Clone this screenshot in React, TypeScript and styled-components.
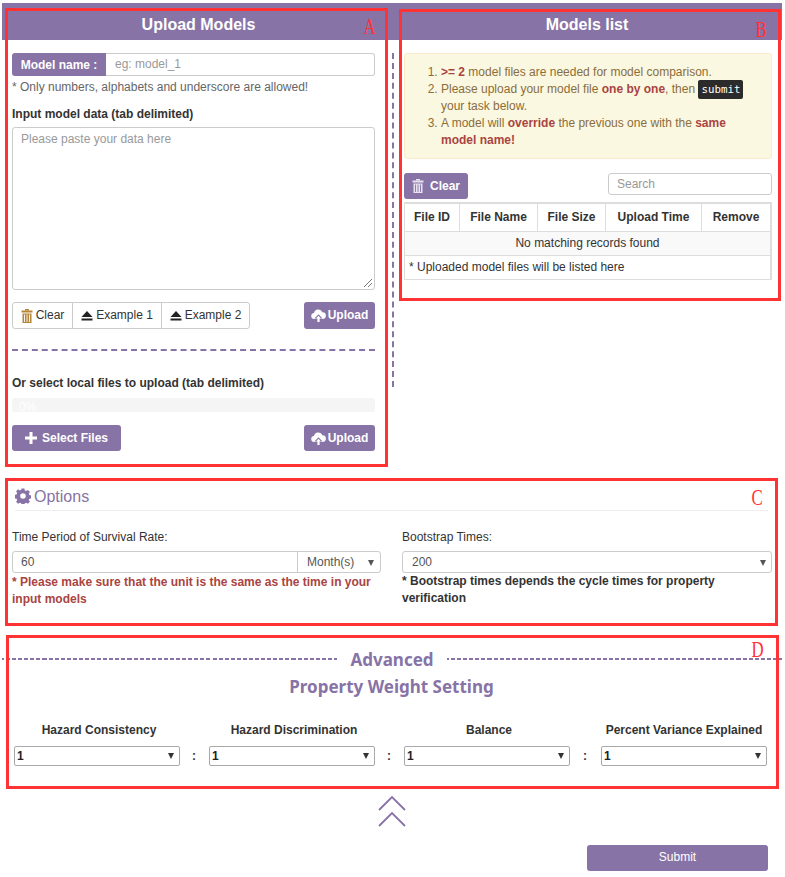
import React from "react";
import styled, { createGlobalStyle } from "styled-components";

const PURPLE = "#8773a6";

const Global = createGlobalStyle`
  html, body { margin: 0; padding: 0; background: #fff; }
  body { font-family: "Liberation Sans", Arial, sans-serif; font-size: 12px; line-height: 17px; color: #333; }
  * { box-sizing: border-box; }
`;

const Page = styled.div`
  position: relative;
  width: 785px;
  height: 877px;
  overflow: hidden;
  padding-top: 3px;
`;
const Top = styled.div`
  display: grid;
  grid-template-columns: 393px 387px;
  margin-left: 2px;
  height: 466px;
`;
const Col = styled.section`
  display: flex;
  flex-direction: column;
  min-width: 0;
`;
const Head = styled.h2`
  margin: 0;
  height: 37px;
  background: ${PURPLE};
  color: #fff;
  font-size: 16px;
  font-weight: 700;
  text-align: center;
  line-height: 43px;
  padding-right: ${(p: { $pr?: number }) => p.$pr ?? 0}px;
`;
const LeftBody = styled.div`
  padding: 13px 20px 0 10px;
  display: flex;
  flex-direction: column;
  position: relative;
`;
const RightBody = styled.div`
  padding: 13px 10px 0 9px;
  display: flex;
  flex-direction: column;
`;
const VDash = styled.div`
  position: absolute;
  left: 392px;
  top: 53px;
  height: 334px;
  width: 0;
  border-left: 2px dashed ${PURPLE};
`;
const NameRow = styled.div`
  display: flex;
  height: 23px;
`;
const NameAddon = styled.div`
  width: 94px;
  background: ${PURPLE};
  color: #fff;
  font-weight: 700;
  border-radius: 3px 0 0 3px;
  text-align: center;
  line-height: 24px;
`;
const NameInput = styled.div`
  flex: 1;
  border: 1px solid #ccc;
  border-left: 0;
  border-radius: 0 3px 3px 0;
  color: #999;
  padding-left: 9px;
  line-height: 20px;
`;
const Hint = styled.div`
  color: #666;
  margin-top: 3px;
`;
const BoldLabel = styled.div`
  font-weight: 700;
  color: #333;
  margin-top: ${(p: { $mt: number }) => p.$mt}px;
`;
const Area = styled.div`
  position: relative;
  margin-top: 4px;
  height: 163px;
  border: 1px solid #ccc;
  border-radius: 3px;
  color: #999;
  padding: 3px 8px;
`;
const Grip = styled.svg`
  position: absolute;
  right: 1px;
  bottom: 1px;
`;
const Actions = styled.div`
  display: flex;
  justify-content: space-between;
  margin-top: 12px;
`;
const BtnGroup = styled.div`
  display: flex;
  height: 27px;
  border: 1px solid #ccc;
  border-radius: 3px;
`;
const GroupBtn = styled.div`
  display: flex;
  align-items: center;
  justify-content: center;
  gap: 3px;
  width: ${(p: { $w: number }) => p.$w}px;
  color: #333;
  & + & { border-left: 1px solid #ccc; }
`;
const PrimaryBtn = styled.div`
  display: flex;
  align-items: center;
  justify-content: center;
  gap: ${(p: { $w: number; $h?: number; $gap?: number }) => p.$gap ?? 2}px;
  width: ${(p) => p.$w}px;
  height: ${(p) => p.$h ?? 27}px;
  background: ${PURPLE};
  color: #fff;
  font-weight: 700;
  border-radius: 3px;
`;
const HDash = styled.div`
  margin-top: 20px;
  border-top: 2px dashed ${PURPLE};
`;
const Progress = styled.div`
  position: relative;
  margin-top: 6px;
  height: 14px;
  background: #f5f5f5;
  border-radius: 3px;
  overflow: hidden;
  color: #fff;
  padding-left: 7px;
  line-height: 19px;
`;
const LocalRow = styled.div`
  display: flex;
  justify-content: space-between;
  margin-top: 13px;
`;
const Notice = styled.div`
  height: 106px;
  background: #fbf8e1;
  border: 1px solid #faebcc;
  border-radius: 3px;
  color: #8a6d3b;
  padding: 10px 0 0;
`;
const NoticeList = styled.ol`
  margin: 0;
  padding: 0 24px 0 36px;
`;
const Warn = styled.b`
  color: #a94442;
`;
const Code = styled.code`
  background: #2b2b2b;
  color: #fff;
  border-radius: 2px;
  padding: 3px 3px;
  font-family: "DejaVu Sans Mono", monospace;
  font-size: 10.8px;
  font-weight: 400;
`;
const TableBar = styled.div`
  display: flex;
  justify-content: space-between;
  align-items: flex-start;
  margin-top: 14px;
`;
const Search = styled.div`
  width: 164px;
  height: 22px;
  border: 1px solid #ccc;
  border-radius: 3px;
  color: #999;
  padding-left: 8px;
  line-height: 20px;
`;
const Table = styled.div`
  margin-top: 3px;
  width: 368px;
  border: 1px solid #ddd;
  border-top-width: 2px;
  border-right-width: 2px;
`;
const HeadRow = styled.div`
  display: grid;
  grid-template-columns: 54px 78px 68px 96px 1fr;
  height: 28px;
`;
const HeadCell = styled.div`
  font-weight: 700;
  text-align: center;
  line-height: 26px;
  border-bottom: 1px solid #ddd;
  & + & { border-left: 1px solid #ddd; }
`;
const EmptyRow = styled.div`
  height: 24px;
  background: #f9f9f9;
  text-align: center;
  line-height: 23px;
  border-bottom: 1px solid #ddd;
`;
const FootRow = styled.div`
  height: 23px;
  padding-left: 4px;
  line-height: 22px;
`;
const Options = styled.section`
  margin: 0 12px;
  height: 153px;
  padding-top: 17px;
`;
const OptionsTitle = styled.h3`
  margin: 0 0 0 3px;
  height: 25px;
  display: flex;
  align-items: center;
  gap: 3px;
  font-size: 16px;
  font-weight: 400;
  color: ${PURPLE};
  border-bottom: 1px solid #eee;
  width: 753px;
  padding-bottom: 4px;
`;
const OptionsGrid = styled.div`
  display: grid;
  grid-template-columns: 369px 370px;
  gap: 21px;
  margin-top: 18px;
`;
const FieldLabel = styled.div`
  color: #333;
`;
const InputRow = styled.div`
  display: flex;
  height: 22px;
  margin-top: 5px;
  border: 1px solid #ccc;
  border-radius: 3px;
`;
const InputVal = styled.div`
  flex: 1;
  padding-left: 8px;
  line-height: 20px;
  color: #555;
`;
const UnitSel = styled.div`
  position: relative;
  width: 83px;
  border-left: 1px solid #ccc;
  padding-left: 9px;
  line-height: 20px;
  color: #555;
`;
const Caret = styled.span`
  position: absolute;
  right: ${(p: { $r: number; $top?: number; $dark?: boolean }) => p.$r}px;
  top: ${(p) => p.$top ?? 8}px;
  width: 0;
  height: 0;
  border-left: 3px solid transparent;
  border-right: 3px solid transparent;
  border-top: 6px solid ${(p) => (p.$dark ? "#333" : "#555")};
`;
const FullSel = styled.div`
  position: relative;
  flex: 1;
  padding-left: 9px;
  line-height: 20px;
  color: #555;
`;
const Note = styled.div`
  font-weight: 700;
  margin-top: ${(p: { $red?: boolean }) => (p.$red ? 1 : 0)}px;
  color: ${(p) => (p.$red ? "#a94442" : "#333")};
`;
const Advanced = styled.section`
  height: 150px;
  padding-top: 26px;
`;
const Divider = styled.div`
  display: flex;
  align-items: center;
  height: 22px;
  margin: 0 3px 0 2px;
`;
const DashLine = styled.div`
  flex: 1;
  border-top: 2px dashed ${PURPLE};
  border-image: repeating-linear-gradient(90deg, ${PURPLE} 0 4px, transparent 4px 6px) 2;
  height: 0;
`;
const DividerText = styled.div`
  width: 110px;
  text-align: center;
  font-family: "Noto Sans", "Open Sans", sans-serif;
  font-size: 17px;
  font-weight: 700;
  color: ${PURPLE};
`;
const SubTitle = styled.div`
  text-align: center;
  font-family: "Noto Sans", "Open Sans", sans-serif;
  font-size: 17px;
  font-weight: 700;
  color: ${PURPLE};
  line-height: 24px;
  margin-top: 5px;
  margin-right: 2px;
`;
const Weights = styled.div`
  display: grid;
  grid-template-columns: 166px 29px 166px 29px 166px 31px 166px;
  margin: 23px 0 0 14px;
  width: 753px;
`;
const WLabel = styled.div`
  text-align: center;
  font-weight: 700;
  color: #333;
  white-space: nowrap;
  padding-bottom: 7px;
  padding-left: ${(p: { $pl: number }) => p.$pl}px;
`;
const WSel = styled.div`
  position: relative;
  height: 20px;
  border: 1px solid #a9a9a9;
  border-radius: 2px;
  color: #222;
  font-weight: 700;
  padding-left: 2px;
  line-height: 18px;
`;
const Colon = styled.div`
  text-align: center;
  font-weight: 700;
  line-height: 21px;
  padding-right: 1px;
`;
const Chevrons = styled.div`
  display: flex;
  justify-content: center;
  margin: 23px 2px 0 0;
  height: 30px;
`;
const SubmitRow = styled.div`
  display: flex;
  justify-content: flex-end;
  padding-right: 17px;
  margin-top: 20px;
`;
const Submit = styled.div`
  width: 181px;
  height: 26px;
  background: ${PURPLE};
  border-radius: 3px;
  color: #fff;
  text-align: center;
  line-height: 24px;
  font-weight: 400;
`;
const RedBox = styled.div`
  position: absolute;
  left: ${(p: { $l: number; $t: number; $w: number; $h: number }) => p.$l}px;
  top: ${(p) => p.$t}px;
  width: ${(p) => p.$w}px;
  height: ${(p) => p.$h}px;
  border: 3px solid #ff3333;
  pointer-events: none;
`;
const RedLetter = styled.span`
  position: absolute;
  right: ${(p: { $r: number; $top: number }) => p.$r}px;
  top: ${(p) => p.$top}px;
  color: #ff3333;
  font-family: "Liberation Serif", serif;
  font-size: 24px;
  line-height: 24px;
  transform: scaleX(0.7);
`;

const Trash = ({ c, slit }: { c: string; slit: string }) => (
  <svg width="12" height="14" viewBox="0 0 12 14" fill="none">
    <rect x="4" y="0" width="4" height="1.5" fill={c} />
    <rect x="0.5" y="1.5" width="11" height="2" fill={c} />
    <path d="M1.5 4.5h9v9.5h-9z" fill={c} />
    <path d="M3.5 5.5v7.5M6 5.5v7.5M8.5 5.5v7.5" stroke={slit} strokeWidth="0.9" />
  </svg>
);
const Eject = () => (
  <svg width="12" height="10" viewBox="0 0 12 10">
    <path d="M6 0l5.5 6H.5z" fill="#222" />
    <rect x="0.5" y="7.5" width="11" height="2" fill="#222" />
  </svg>
);
const CloudUp = () => (
  <svg width="15" height="13" viewBox="0 0 15 13">
    <path d="M3.5 10A3 3 0 0 1 3 4 4.5 4.5 0 0 1 11.5 3.2 3.4 3.4 0 0 1 11.5 10z" fill="#fff" />
    <path d="M7.5 5.2L11.6 9.6H9.6V13H5.4V9.6H3.4z" fill={PURPLE} />
    <path d="M7.5 6.8L10 9.4H8.6V13H6.4V9.4H5z" fill="#fff" />
  </svg>
);
const Plus = () => (
  <svg width="12" height="12" viewBox="0 0 12 12">
    <path d="M4.5 0h3v4.5H12v3H7.5V12h-3V7.5H0v-3h4.5z" fill="#fff" />
  </svg>
);
const Gear = () => (
  <svg width="16" height="16" viewBox="0 0 16 16">
    <path
      fillRule="evenodd"
      fill={PURPLE}
      d="M6.6.5h2.8l.4 2 1.3.6 1.8-1.1 2 2-1.1 1.8.6 1.3 2 .4v2.8l-2 .4-.6 1.3 1.1 1.8-2 2-1.8-1.1-1.3.6-.4 2H6.6l-.4-2-1.3-.6-1.8 1.1-2-2 1.1-1.8-.6-1.3-2-.4V6.8l2-.4.6-1.3L1.1 3.3l2-2 1.8 1.1 1.3-.6zM8 5.2a2.8 2.8 0 1 0 0 5.6 2.8 2.8 0 0 0 0-5.6z"
    />
  </svg>
);

const weights = ["Hazard Consistency", "Hazard Discrimination", "Balance", "Percent Variance Explained"];

export default function App() {
  return (
    <Page>
      <Global />
      <Top>
        <Col>
          <Head>Upload Models</Head>
          <LeftBody>
            <NameRow>
              <NameAddon>Model name :</NameAddon>
              <NameInput>eg: model_1</NameInput>
            </NameRow>
            <Hint>* Only numbers, alphabets and underscore are allowed!</Hint>
            <BoldLabel $mt={10}>Input model data (tab delimited)</BoldLabel>
            <Area>
              Please paste your data here
              <Grip width="10" height="10" viewBox="0 0 10 10">
                <path d="M1 9L9 1M5 9L9 5" stroke="#777" strokeWidth="1" />
              </Grip>
            </Area>
            <Actions>
              <BtnGroup>
                <GroupBtn $w={59}>
                  <Trash c="#b5853a" slit="#fff" />
                  Clear
                </GroupBtn>
                <GroupBtn $w={89}>
                  <Eject />
                  Example 1
                </GroupBtn>
                <GroupBtn $w={88}>
                  <Eject />
                  Example 2
                </GroupBtn>
              </BtnGroup>
              <PrimaryBtn $w={71}>
                <CloudUp />
                Upload
              </PrimaryBtn>
            </Actions>
            <HDash />
            <BoldLabel $mt={24}>Or select local files to upload (tab delimited)</BoldLabel>
            <Progress>0%</Progress>
            <LocalRow>
              <PrimaryBtn $w={109} $h={26} $gap={5}>
                <Plus />
                Select Files
              </PrimaryBtn>
              <PrimaryBtn $w={71} $h={26}>
                <CloudUp />
                Upload
              </PrimaryBtn>
            </LocalRow>
          </LeftBody>
        </Col>
        <Col>
          <Head $pr={3}>Models list</Head>
          <RightBody>
            <Notice>
              <NoticeList>
                <li>
                  <Warn>&gt;= 2</Warn> model files are needed for model comparison.
                </li>
                <li>
                  Please upload your model file <Warn>one by one</Warn>, then <Code>submit</Code> your task below.
                </li>
                <li>
                  A model will <Warn>override</Warn> the previous one with the <Warn>same model name!</Warn>
                </li>
              </NoticeList>
            </Notice>
            <TableBar>
              <PrimaryBtn $w={64} $h={26} $gap={6}>
                <Trash c="#e8e3ef" slit={PURPLE} />
                Clear
              </PrimaryBtn>
              <Search>Search</Search>
            </TableBar>
            <Table>
              <HeadRow>
                <HeadCell>File ID</HeadCell>
                <HeadCell>File Name</HeadCell>
                <HeadCell>File Size</HeadCell>
                <HeadCell>Upload Time</HeadCell>
                <HeadCell>Remove</HeadCell>
              </HeadRow>
              <EmptyRow>No matching records found</EmptyRow>
              <FootRow>* Uploaded model files will be listed here</FootRow>
            </Table>
          </RightBody>
        </Col>
      </Top>
      <Options>
        <OptionsTitle>
          <Gear />
          Options
        </OptionsTitle>
        <OptionsGrid>
          <div>
            <FieldLabel>Time Period of Survival Rate:</FieldLabel>
            <InputRow>
              <InputVal>60</InputVal>
              <UnitSel>
                Month(s)
                <Caret $r={6} />
              </UnitSel>
            </InputRow>
            <Note $red>* Please make sure that the unit is the same as the time in your input models</Note>
          </div>
          <div>
            <FieldLabel>Bootstrap Times:</FieldLabel>
            <InputRow>
              <FullSel>
                200
                <Caret $r={5} />
              </FullSel>
            </InputRow>
            <Note>* Bootstrap times depends the cycle times for property verification</Note>
          </div>
        </OptionsGrid>
      </Options>
      <Advanced>
        <Divider>
          <DashLine />
          <DividerText>Advanced</DividerText>
          <DashLine />
        </Divider>
        <SubTitle>Property Weight Setting</SubTitle>
        <Weights>
          {weights.map((w, i) => (
            <React.Fragment key={w}>
              <WLabel $pl={i < 3 ? 4 : 0}>{w}</WLabel>
              {i < 3 && <span />}
            </React.Fragment>
          ))}
          {weights.map((w, i) => (
            <React.Fragment key={w}>
              <WSel>
                1
                <Caret $r={5} $top={6} $dark />
              </WSel>
              {i < 3 && <Colon>:</Colon>}
            </React.Fragment>
          ))}
        </Weights>
      </Advanced>
      <Chevrons>
        <svg width="28" height="32" viewBox="0 0 28 32" fill="none" stroke={PURPLE} strokeWidth="1.8">
          <path d="M1 15L14 2L27 15M1 31L14 18L27 31" />
        </svg>
      </Chevrons>
      <SubmitRow>
        <Submit>Submit</Submit>
      </SubmitRow>
      <VDash />
      <RedBox $l={5} $t={8} $w={383} $h={459}>
        <RedLetter $r={7} $top={3}>A</RedLetter>
      </RedBox>
      <RedBox $l={399} $t={9} $w={382} $h={292}>
        <RedLetter $r={9} $top={5}>B</RedLetter>
      </RedBox>
      <RedBox $l={5} $t={478} $w={773} $h={148}>
        <RedLetter $r={10} $top={4}>C</RedLetter>
      </RedBox>
      <RedBox $l={6} $t={635} $w={773} $h={154}>
        <RedLetter $r={10} $top={-1}>D</RedLetter>
      </RedBox>
    </Page>
  );
}
